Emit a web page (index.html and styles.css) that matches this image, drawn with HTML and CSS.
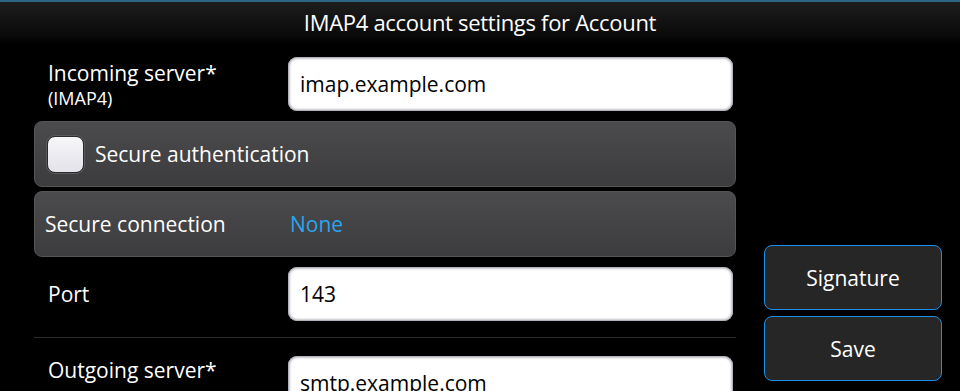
FILE: index.html
```html
<!DOCTYPE html>
<html>
<head>
<meta charset="utf-8">
<link rel="stylesheet" href="styles.css">
</head>
<body>
<header class="titlebar">IMAP4 account settings for Account</header>
<main class="main">
  <section class="form">
    <div class="row row-field">
      <div class="label">
        <div class="label-main">Incoming server*</div>
        <div class="label-sub">(IMAP4)</div>
      </div>
      <div class="input">imap.example.com</div>
    </div>
    <div class="panel panel-check">
      <span class="checkbox"></span>
      <span class="panel-text">Secure authentication</span>
    </div>
    <div class="panel panel-select">
      <span class="panel-text select-label">Secure connection</span>
      <span class="select-value">None</span>
    </div>
    <div class="row row-field row-port">
      <div class="label"><div class="label-main">Port</div></div>
      <div class="input">143</div>
    </div>
    <div class="divider"></div>
    <div class="row row-field row-out">
      <div class="label"><div class="label-main">Outgoing server*</div></div>
      <div class="input">smtp.example.com</div>
    </div>
  </section>
  <aside class="actions">
    <button class="btn">Signature</button>
    <button class="btn">Save</button>
  </aside>
</main>
</body>
</html>
```
FILE: styles.css
```css
html, body {
  margin: 0;
  padding: 0;
  background: #000;
  height: 100%;
  overflow: hidden;
}
body {
  font-family: "Open Sans", "DejaVu Sans", sans-serif;
  color: #fff;
}
.titlebar {
  height: 44px;
  box-sizing: border-box;
  border-top: 2px solid #2f6685;
  background: linear-gradient(#1d1d1d, #0a0a0a 80%, #000);
  text-align: center;
  font-size: 22px;
  line-height: 40px;
  letter-spacing: -0.3px;
  color: #fff;
}
.main {
  display: flex;
  height: 347px;
  overflow: hidden;
  padding-left: 34px;
}
.form {
  width: 702px;
  display: flex;
  flex-direction: column;
  flex-shrink: 0;
  padding-top: 13px;
}
.form > * {
  flex-shrink: 0;
}
.row-field {
  display: flex;
  align-items: flex-start;
}
.label {
  width: 254px;
  box-sizing: border-box;
  padding-left: 14px;
}
.label-main {
  font-size: 21px;
  line-height: 28px;
  padding-top: 2px;
}
.label-sub {
  font-size: 18px;
  line-height: 22px;
}
.input {
  width: 445px;
  height: 54px;
  box-sizing: border-box;
  background: #fff;
  border-radius: 9px;
  box-shadow: inset 0 0 3px 1px #8a8794;
  color: #000;
  font-size: 21px;
  line-height: 54px;
  padding-left: 12px;
  flex-shrink: 0;
}
.panel {
  height: 66px;
  box-sizing: border-box;
  border-radius: 8px;
  background: linear-gradient(#4b4a4c, #3c3b3d);
  border: 1px solid #555;
  display: flex;
  align-items: center;
}
.panel-check {
  margin-top: 10px;
  padding-left: 12px;
}
.panel-select {
  margin-top: 4px;
  padding-left: 10px;
}
.checkbox {
  width: 37px;
  height: 37px;
  box-sizing: border-box;
  border-radius: 8px;
  border: 1px solid #2a2a2c;
  background: linear-gradient(#f6f6f8, #e4e2ea);
  box-shadow: 0 0 0 1px #5a595c;
  margin-right: 11px;
}
.panel-text {
  font-size: 21px;
}
.select-label {
  width: 245px;
}
.select-value {
  font-size: 21px;
  color: #2aa6ef;
}
.row-port {
  margin-top: 10px;
}
.row-port .label-main {
  padding-top: 13px;
}
.divider {
  margin-top: 16px;
  height: 1px;
  background: #2b2b2b;
}
.row-out {
  margin-top: 18px;
}
.row-out .label-main {
  padding-top: 0;
}
.actions {
  flex: 1;
  display: flex;
  flex-direction: column;
  justify-content: flex-end;
  padding: 0 18px 10px 28px;
  gap: 6px;
}
.btn {
  height: 65px;
  width: 178px;
  box-sizing: border-box;
  border: 1px solid #1c8ee6;
  border-radius: 8px;
  background: #262626;
  color: #fff;
  font-family: "Open Sans", "DejaVu Sans", sans-serif;
  font-size: 21px;
  padding: 0;
}
```
